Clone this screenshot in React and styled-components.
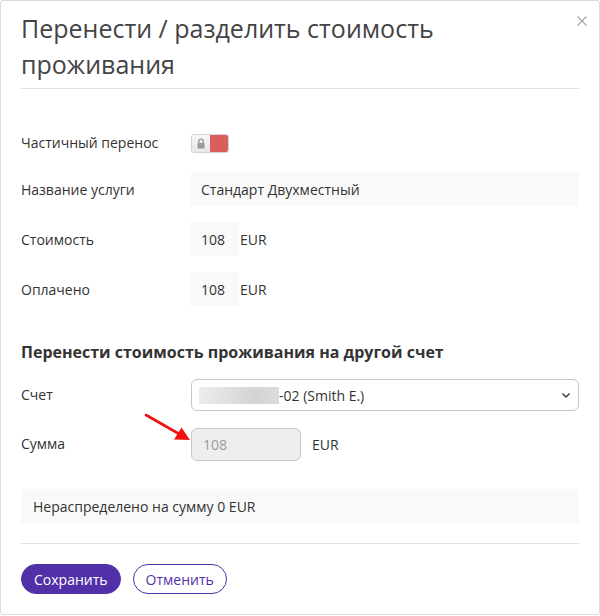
import React from "react";
import styled, { createGlobalStyle } from "styled-components";

const Global = createGlobalStyle`
  html, body { margin: 0; padding: 0; background: #fff; }
  body { font-family: "Open Sans", "Noto Sans", sans-serif; color: #333; }
  * { box-sizing: border-box; }
`;

const Dialog = styled.div`
  position: relative;
  width: 600px;
  height: 615px;
  border: 1px solid #dcdcdc;
  border-radius: 3px;
  padding: 0 20px;
  background: #fff;
`;

const Header = styled.div`
  padding: 9px 0 6px;
  border-bottom: 1px solid #e0e0e0;
`;

const Title = styled.h1`
  margin: 0;
  font-size: 25px;
  line-height: 36px;
  font-weight: 400;
  color: #444;
  width: 470px;
`;

const Close = styled.button`
  position: absolute;
  top: 13px;
  right: 10px;
  border: 0;
  background: none;
  padding: 0;
  width: 14px;
  height: 14px;
  cursor: pointer;
  display: flex;
`;

const Form = styled.div`
  display: flex;
  flex-direction: column;
  padding-top: 36px;
`;

const Row = styled.div`
  display: grid;
  grid-template-columns: 170px 1fr;
  align-items: center;
  min-height: ${(p) => p.$h || 34}px;
  margin-bottom: ${(p) => p.$mb ?? 16}px;
`;

const Label = styled.div`
  font-size: 14px;
  color: #333;
  margin-top: ${(p) => p.$up ? "-2px" : "0"};
`;

const Field = styled.div`
  display: flex;
  align-items: center;
  gap: ${(p) => p.$gap || 1}px;
`;

const StaticBox = styled.div`
  background: #f9f9f9;
  height: 34px;
  display: flex;
  align-items: center;
  padding: 0 10px;
  font-size: 14px;
  color: #333;
  width: ${(p) => p.$w || "100%"};
`;

const Unit = styled.span`
  font-size: 14px;
  color: #333;
`;

const Toggle = styled.div`
  display: flex;
  width: 38px;
  height: 19px;
  border-radius: 3px;
  overflow: hidden;
  border: 1px solid #d4d4d4;
  margin-top: 3px;
`;

const ToggleLock = styled.div`
  flex: 1;
  background: linear-gradient(#f8f8f8, #e6e6e6);
  display: flex;
  align-items: center;
  justify-content: center;
`;

const ToggleOn = styled.div`
  flex: 1;
  background: #d9605a;
`;

const SectionTitle = styled.h2`
  margin: 35px 0 16px;
  font-size: 16px;
  line-height: 22px;
  font-weight: 700;
  color: #333;
`;

const Select = styled.div`
  height: 32px;
  border: 1px solid #c8c8c8;
  border-radius: 6px;
  display: flex;
  align-items: center;
  padding: 0 7px;
  font-size: 14px;
  color: #333;
`;

const Blur = styled.span`
  display: inline-block;
  width: 80px;
  height: 17px;
  background: linear-gradient(90deg, #ececec 0%, #e2e2e2 30%, #d3d3d3 70%, #dcdcdc 100%);
`;

const SelectText = styled.span`
  flex: 1;
`;

const NumInput = styled.div`
  width: 110px;
  height: 33px;
  border: 1px solid #c8c8c8;
  border-radius: 6px;
  background: #eeeeee;
  color: #9a9a9a;
  font-size: 14px;
  display: flex;
  align-items: center;
  padding: 0 11px;
`;

const Info = styled.div`
  margin-top: 12px;
  background: #f9f9f9;
  height: 34px;
  display: flex;
  align-items: center;
  padding: 0 12px;
  font-size: 14px;
  color: #333;
`;

const Divider = styled.div`
  height: 1px;
  background: #e0e0e0;
  margin: 20px 0 20px;
`;

const Buttons = styled.div`
  display: flex;
  gap: 12px;
`;

const Button = styled.button`
  height: 30px;
  border-radius: 15px;
  padding: 0 12px;
  font-family: "Open Sans", "Noto Sans", sans-serif;
  font-size: 14px;
  cursor: pointer;
  border: 1px solid #5230a8;
  background: ${(p) => (p.$primary ? "#5230a8" : "#fff")};
  color: ${(p) => (p.$primary ? "#fff" : "#5230a8")};
`;

const Arrow = styled.svg`
  position: absolute;
  left: 140px;
  top: 410px;
  pointer-events: none;
`;

export default function App() {
  return (
    <>
      <Global />
      <Dialog>
        <Close aria-label="close">
          <svg width="14" height="14" viewBox="0 0 14 14">
            <path d="M2.5 2.5 L11.5 11.5 M11.5 2.5 L2.5 11.5" stroke="#a5a5a5" strokeWidth="1.2" />
          </svg>
        </Close>
        <Header>
          <Title>Перенести / разделить стоимость проживания</Title>
        </Header>
        <Form>
          <Row $h={34} $mb={13}>
            <Label>Частичный перенос</Label>
            <Field>
              <Toggle>
                <ToggleLock>
                  <svg width="10" height="11" viewBox="0 0 10 11">
                    <path d="M2.8 5 V3.4 A2.2 2.2 0 0 1 7.2 3.4 V5" fill="none" stroke="#9a9a9a" strokeWidth="1.3" />
                    <rect x="1.5" y="5" width="7" height="5.5" rx="0.8" fill="#9a9a9a" />
                  </svg>
                </ToggleLock>
                <ToggleOn />
              </Toggle>
            </Field>
          </Row>
          <Row>
            <Label>Название услуги</Label>
            <StaticBox>Стандарт Двухместный</StaticBox>
          </Row>
          <Row>
            <Label>Стоимость</Label>
            <Field>
              <StaticBox $w="48px">108</StaticBox>
              <Unit>EUR</Unit>
            </Field>
          </Row>
          <Row $mb={0}>
            <Label>Оплачено</Label>
            <Field>
              <StaticBox $w="48px">108</StaticBox>
              <Unit>EUR</Unit>
            </Field>
          </Row>
          <SectionTitle>Перенести стоимость проживания на другой счет</SectionTitle>
          <Row $h={32} $mb={17}>
            <Label $up>Счет</Label>
            <Select>
              <Blur />
              <SelectText>-02 (Smith E.)</SelectText>
              <svg width="10" height="7" viewBox="0 0 10 7">
                <path d="M1.5 1.5 L5 5 L8.5 1.5" fill="none" stroke="#333" strokeWidth="1.4" />
              </svg>
            </Select>
          </Row>
          <Row $h={33} $mb={16}>
            <Label $up>Сумма</Label>
            <Field $gap={11}>
              <NumInput>108</NumInput>
              <Unit $up>EUR</Unit>
            </Field>
          </Row>
          <Info>Нераспределено на сумму 0 EUR</Info>
          <Divider />
          <Buttons>
            <Button $primary>Сохранить</Button>
            <Button>Отменить</Button>
          </Buttons>
        </Form>
        <Arrow width="52" height="34" viewBox="0 0 52 34">
          <path d="M5 4 L40 24" stroke="#f01010" strokeWidth="2.6" strokeLinecap="round" />
          <path d="M49 29 L33 28.5 L40.5 16.5 Z" fill="#f01010" />
        </Arrow>
      </Dialog>
    </>
  );
}
